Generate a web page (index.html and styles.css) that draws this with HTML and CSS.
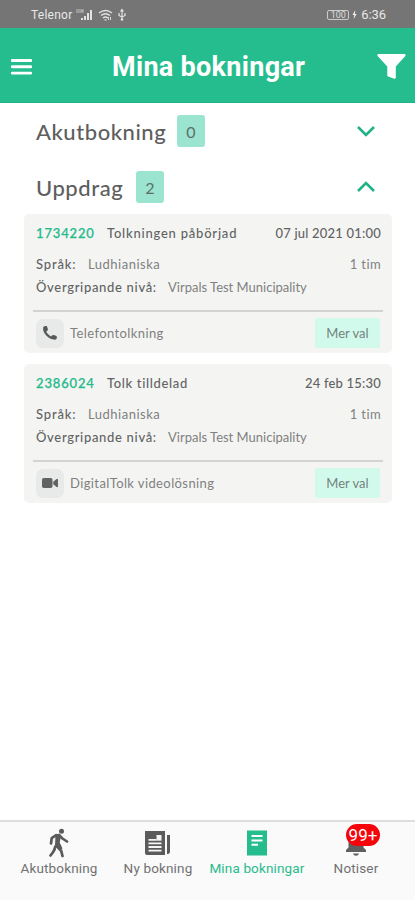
FILE: index.html
```html
<!DOCTYPE html>
<html lang="sv">
<head>
<meta charset="utf-8">
<meta name="viewport" content="width=device-width, initial-scale=1">
<title>Mina bokningar</title>
<link rel="stylesheet" href="styles.css">
</head>
<body>
<div class="statusbar">
  <span class="carrier">Telenor</span>
  <svg class="signal" width="50" height="14" viewBox="0 0 50 14">
    <path d="M1 1v4M3 1v4M5 1v4M5 3h2M7 1v4" stroke="#d0d0d0" stroke-width=".8" fill="none"/>
    <path d="M5 12v-2h2v2zM8 12V8h2v4zM11 12V5h2v7zM14 12V2h2v10z" fill="#e2e2e2"/>
    <path d="M23 5q6.500-5 13 0M25 7.500q4.500-3.500 9 0M27 10q2.500-2 5 0M28.500 11.800h2" stroke="#e2e2e2" stroke-width="1.300" fill="none"/>
    <path d="M32.500 9v3M34.500 12V9" stroke="#e2e2e2" stroke-width=".9"/>
    <path d="M46 2v9M43 5v2.500l3 1.500 3-1.500V5M44.500 3.500L46 1.500l1.500 2" stroke="#e2e2e2" stroke-width="1.200" fill="none"/>
    <circle cx="46" cy="11.500" r="1.300" fill="#e2e2e2"/>
  </svg>
  <span class="battery">100</span>
  <svg class="bolt" width="5" height="9" viewBox="0 0 5 9"><path d="M3.200 0L.5 5h1.700L1.700 9l3-5H3z" fill="#e8e8e8"/></svg>
  <span class="clock">6:36</span>
</div>
<header class="appbar">
  <svg width="21" height="16" viewBox="0 0 21 16"><path d="M1.200 1.500h18.600M1.200 7.800h18.600M1.200 14.100h18.600" stroke="#fff" stroke-width="2.900" stroke-linecap="round"/></svg>
  <h1>Mina bokningar</h1>
  <svg width="29" height="25" viewBox="0 0 29 25"><path d="M1.200 0h26.600q1.400.6.500 1.900L18.800 12.600v11.200q-.2 1.300-1.500 1l-6.200-2.300q-.8-.4-.8-1.200v-8.700L.6 1.900Q-.2.700 1.200 0z" fill="#fff"/></svg>
</header>
<main>
  <section class="group akut">
    <h2>Akutbokning</h2><span class="count">0</span>
    <svg width="20" height="12" viewBox="0 0 20 12"><path d="M2 2l8 8 8-8" class="chevron"/></svg>
  </section>
  <section class="group uppdrag">
    <h2>Uppdrag</h2><span class="count">2</span>
    <svg width="20" height="12" viewBox="0 0 20 12"><path d="M2 10l8-8 8 8" class="chevron"/></svg>
  </section>
  <article class="card">
    <div class="row head"><b class="id">1734220</b><b class="state-a">Tolkningen påbörjad</b><b class="end date">07 jul 2021 01:00</b></div>
    <div class="row lang"><b class="l-lang">Språk:</b><span class="v-lang">Ludhianiska</span><span class="end dur">1 tim</span></div>
    <div class="row level"><b class="l-level">Övergripande nivå:</b><span class="v-level">Virpals Test Municipality</span></div>
    <div class="row foot">
      <i class="kind"><svg width="16" height="16" viewBox="0 0 16 16"><path d="M1.200 2.500Q1.500 1.200 3 1l1.400.1q.7.200.8.800l.7 2.400q.1.700-.4 1.100L4.200 6.700q1.500 3 4.700 4.800l1.500-1.300q.5-.4 1.100-.2l2.500.8q.8.300.8 1v1.500q-.3 1.400-1.800 1.500Q7.500 14.200 4 10.200T1.200 2.500z" fill="#555a57"/></svg></i>
      <span class="kind-name">Telefontolkning</span><button>Mer val</button>
    </div>
  </article>
  <article class="card">
    <div class="row head"><b class="id">2386024</b><b class="state-b">Tolk tilldelad</b><b class="end date">24 feb 15:30</b></div>
    <div class="row lang"><b class="l-lang">Språk:</b><span class="v-lang">Ludhianiska</span><span class="end dur">1 tim</span></div>
    <div class="row level"><b class="l-level">Övergripande nivå:</b><span class="v-level">Virpals Test Municipality</span></div>
    <div class="row foot">
      <i class="kind"><svg width="16" height="10" viewBox="0 0 16 10"><rect width="10.500" height="10" rx="1.800" fill="#606361"/><path d="M11.200 3.700L14.600 1q1.200-.5 1.400.5v7q-.2 1-1.400.5l-3.400-2.700z" fill="#606361"/></svg></i>
      <span class="kind-name">DigitalTolk videolösning</span><button>Mer val</button>
    </div>
  </article>
</main>
<nav>
  <a class="tab t1">
    <svg width="20" height="30" viewBox="0 0 20 30"><circle cx="12.500" cy="3.300" r="2.500" fill="#5b5b5b"/><path d="M7.200 7.200L2.700 10.200 2 15.500M10 7l3.500 3.500 4.500 3M5.500 21.500L3.800 24.500 1.500 27.500M13.500 28l-1.300-5.200-4-4" fill="none" stroke="#5b5b5b" stroke-width="2.700" stroke-linecap="round" stroke-linejoin="round"/><path d="M6.500 6.700Q9.500 5 12 8l-1.300 6.500 2.800 6-2.800 1.700L6 17.500z" fill="#5b5b5b"/><path d="M6.500 17.500l-1.200 4.200" stroke="#5b5b5b" stroke-width="2.500"/></svg>
    <span>Akutbokning</span>
  </a>
  <a class="tab t2">
    <svg width="26" height="26" viewBox="0 0 26 26"><path d="M0 1h20v24H2q-2 0-2-2zM22 5h3v17q-.3 1.500-1.800 2H22z" fill="#5b5b5b"/><path d="M3.500 13.400h13M3.500 17h13M3.500 20.600h13M3.500 9.800h8" stroke="#f5f5f5" stroke-width="1.800"/><path d="M11.500 5h5v5.700h-5z" fill="#f5f5f5"/></svg>
    <span>Ny bokning</span>
  </a>
  <a class="tab t3 active">
    <svg width="20" height="26" viewBox="0 0 20 26"><path d="M0 .5h20v25H0z" fill="#25bd8e"/><path d="M4.500 6h11M4.500 10.400h11M4.500 14.800h6.500" stroke="#fff" stroke-width="2"/></svg>
    <span>Mina bokningar</span>
  </a>
  <a class="tab t4">
    <svg width="22" height="27" viewBox="0 0 22 27"><path d="M11 2q7 1 7.500 10v6l2.500 2.500v2H1v-2L3.500 18v-6Q4 3 11 2zM8 24h6q-.5 2.300-3 2.300T8 24z" fill="#5f5f5f"/></svg>
    <em class="badge">99+</em>
    <span>Notiser</span>
  </a>
</nav>
</body>
</html>
```
FILE: styles.css
```css
* { box-sizing: border-box; }
body { margin: 0; width: 415px; height: 900px; display: flex; flex-direction: column; background: #fff; font-family: Lato, sans-serif; font-variant-ligatures: none; color: #808080; overflow: hidden; }
svg { display: block; flex: none; }
h1, h2 { margin: 0; white-space: nowrap; }
.statusbar { height: 28px; flex: none; background: #757575; display: flex; align-items: center; padding: 1px 29px 0 31px; font: 12px Roboto, sans-serif; color: #e8e8e8; }
.carrier { width: 45px; letter-spacing: .25px; }
.battery { margin-left: auto; width: 22px; height: 10px; border: 1px solid #ccc; border-radius: 2px; font-size: 9px; line-height: 8px; text-align: center; color: #ddd; }
.bolt { margin: 0 4px 0 3px; }
.clock { font-size: 13px; letter-spacing: -.1px; }
.appbar { height: 75px; flex: none; background: #25bd8e; display: flex; align-items: center; justify-content: space-between; padding: 3px 9px 0 11px; border-bottom: 1px solid #1eb384; }
h1 { font: bold 27px Roboto, sans-serif; letter-spacing: .3px; color: #fff; width: 193px; margin-left: 8px; }
main { flex: 1; padding: 12px 23px 0 24px; }
.group { height: 32px; display: flex; align-items: center; padding: 0 16px 0 12px; }
.group svg { margin-left: auto; }
.uppdrag { margin: 24px 0 11px; }
h2 { font-size: 22px; font-weight: 500; color: #5e5e5e; margin-right: 12px; letter-spacing: .55px; }
.akut h2 { width: 129px; }
.uppdrag h2 { width: 88px; }
.count { width: 28px; height: 32px; border-radius: 3px; background: #9be4cf; color: #5b6f68; font-size: 16px; line-height: 33px; text-align: center; }
.chevron { fill: none; stroke: #20b286; stroke-width: 2.6; }
.card { height: 139px; margin-bottom: 11px; background: #f4f5f3; border-radius: 5px; padding: 9px 11px 0 12px; font-size: 13px; }
.row { display: flex; align-items: center; white-space: nowrap; line-height: 20px; }
.row b { font-weight: 500; color: #636363; }
.row .id { color: #26ba8c; width: 59px; margin-right: 12px; letter-spacing: .85px; -webkit-text-stroke: .25px #26ba8c; }
.row .end { margin-left: auto; }
.state-a { letter-spacing: .78px; }
.state-b { letter-spacing: .65px; }
.date { letter-spacing: .2px; }
.lang { margin-top: 11px; }
.level { margin-top: 3px; }
.l-lang { width: 52px; letter-spacing: .85px; }
.v-lang { letter-spacing: .5px; }
.dur { letter-spacing: .4px; }
.l-level { width: 132px; letter-spacing: .68px; }
.kind-name { letter-spacing: .4px; }
.foot { margin: 13px -2px 0 -3px; border-top: 2px solid #d2d3d2; padding: 6px 3px 0; }
.kind { width: 28px; height: 29px; border-radius: 7px; background: #e7eae9; display: flex; align-items: center; justify-content: center; margin-right: 6px; }
button { margin-left: auto; width: 65px; height: 30px; border: 0; border-radius: 2px; background: #d2faec; color: #73837d; font: 13px Lato, sans-serif; padding: 0; }
nav { height: 80px; flex: none; border-top: 2px solid #dedede; background: #fafafa; display: flex; font: 13.5px Roboto, sans-serif; color: #717171; }
.tab { position: relative; display: flex; flex-direction: column; align-items: center; padding-top: 6px; white-space: nowrap; }
.tab svg { height: 30px; }
.tab span { margin-top: 1px; line-height: 18px; letter-spacing: .15px; }
.t1 { width: 118px; }
.t2 { width: 80px; }
.t3 { width: 118px; }
.t4 { width: 80px; }
.active { color: #28ba8d; }
.badge { position: absolute; left: 30px; top: 2px; width: 34px; height: 22px; border-radius: 11px; background: #f5050b; color: #fff; font: 17px/23px Roboto, sans-serif; text-align: center; }
```
